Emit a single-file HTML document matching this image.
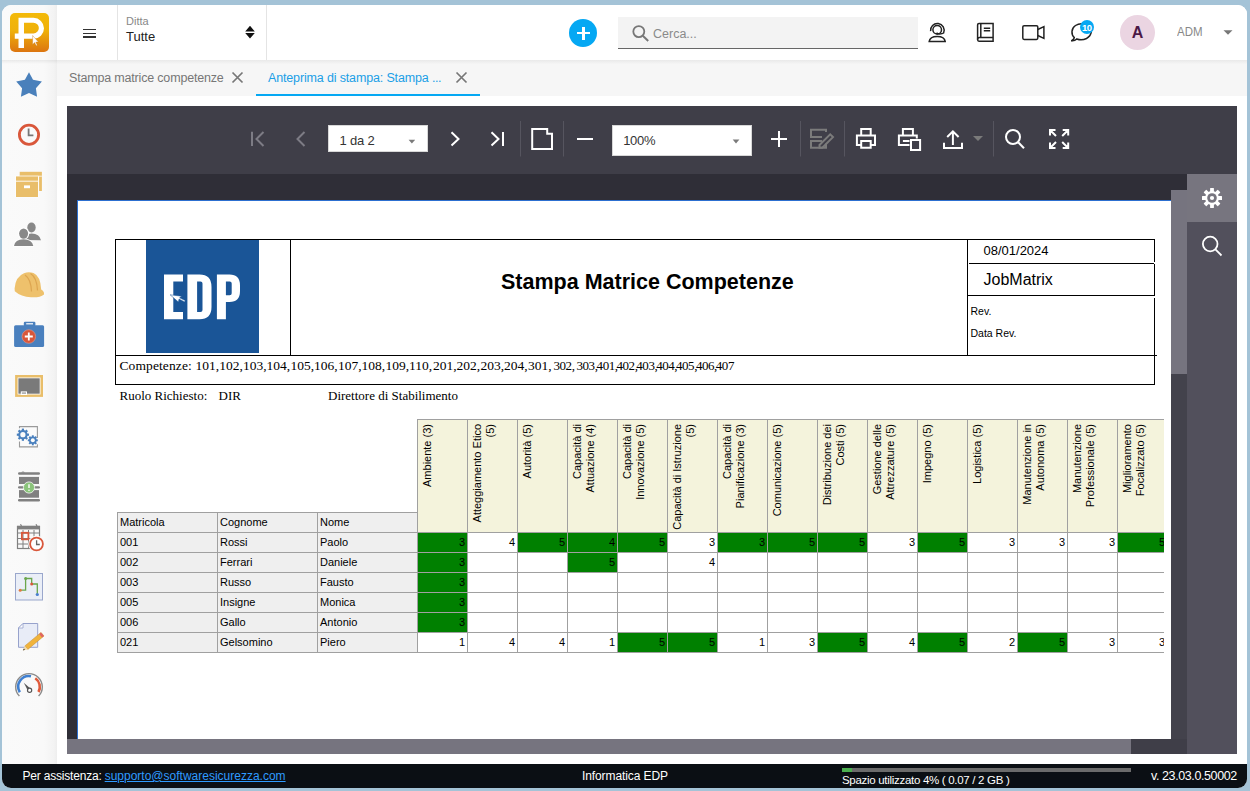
<!DOCTYPE html>
<html><head><meta charset="utf-8">
<style>
*{margin:0;padding:0;box-sizing:border-box}
html,body{width:1250px;height:791px;overflow:hidden;background:#a4c3d7;font-family:"Liberation Sans",sans-serif}
.a{position:absolute}
#app{position:absolute;left:2px;top:5px;width:1245px;height:783px;background:#fff;border-radius:9px;overflow:hidden}
#L{position:absolute;left:-2px;top:-5px;width:1250px;height:791px}
.t{position:absolute;white-space:nowrap;line-height:1}
svg{position:absolute;overflow:visible}
.cz{top:359px;font-family:"Liberation Serif",serif;font-size:13px;color:#000}
.mt{position:absolute;white-space:nowrap;font-size:11px;line-height:19px;color:#000}
.vh{position:absolute;width:113px;height:49px;transform-origin:0 0;transform:rotate(-90deg);font-size:11px;line-height:13px;text-align:right;padding:3px 5px 0 0;color:#000;white-space:nowrap}
</style></head>
<body>
<div id="app"><div id="L">
  <!-- sidebar -->
  <div class="a" style="left:2px;top:5px;width:55px;height:759px;background:linear-gradient(to right,#fafafa 0,#f9f9f9 42px,#f3f3f3 52px,#eeeeee 55px)"></div>
  <div class="a" style="left:2px;top:60px;width:55px;height:4px;background:linear-gradient(rgba(0,0,0,0.065),rgba(0,0,0,0))"></div>
  <!-- header -->
  <div class="a" style="left:57px;top:5px;width:1190px;height:55px;background:#fff"></div>
  <div class="a" style="left:117px;top:5px;width:1px;height:55px;background:#e4e4e4"></div>
  <div class="a" style="left:266px;top:5px;width:1px;height:55px;background:#e4e4e4"></div>
  <!-- logo -->
  <svg style="left:10px;top:13px" width="39" height="39" viewBox="0 0 39 39">
    <defs><linearGradient id="lg" x1="0" y1="0" x2="0" y2="1"><stop offset="0" stop-color="#f3b908"/><stop offset="0.45" stop-color="#efb10a"/><stop offset="1" stop-color="#dc7510"/></linearGradient></defs>
    <rect x="0" y="0" width="39" height="39" rx="5" fill="url(#lg)"/>
    <path fill="#fff" fill-rule="evenodd" d="M8.5,4.8 H23.5 A10.5,10.5 0 0 1 23.5,25.8 H14 V35 H8.5 V25.8 H4.8 V20.5 H8.5 Z M14,9.7 H23.5 A5.35,5.35 0 0 1 23.5,20.4 H14 Z"/>
    <path fill="#fff" stroke="#c77a20" stroke-width="0.4" d="M22.6,22.5 L22.6,31.5 L24.6,29.6 L26.2,32.8 L27.3,32.3 L25.8,29.1 L28.4,29 Z"/>
  </svg>
  <!-- hamburger -->
  <div class="a" style="left:83.4px;top:28.9px;width:12.6px;height:1.4px;background:#333"></div>
  <div class="a" style="left:83.4px;top:32.6px;width:12.6px;height:1.4px;background:#333"></div>
  <div class="a" style="left:83.4px;top:36.3px;width:12.6px;height:1.4px;background:#333"></div>
  <!-- ditta -->
  <div class="t" style="left:126px;top:15.5px;font-size:11px;color:#888">Ditta</div>
  <div class="t" style="left:126px;top:29.5px;font-size:13px;color:#222">Tutte</div>
  <svg style="left:245px;top:25px" width="10" height="14" viewBox="0 0 10 14"><path d="M5,0.7 L9.8,6.5 H0.2 Z M0.2,8.1 H9.8 L5,13.5 Z" fill="#111"/></svg>
  <!-- plus button -->
  <div class="a" style="left:568.8px;top:18.8px;width:28.4px;height:28.4px;border-radius:50%;background:#05a8f3"></div>
  <div class="a" style="left:577px;top:31.9px;width:13px;height:2.2px;background:#fff"></div>
  <div class="a" style="left:582.4px;top:26.5px;width:2.2px;height:13px;background:#fff"></div>
  <!-- search -->
  <div class="a" style="left:618px;top:17px;width:300px;height:32px;background:#f3f3f3;border-bottom:1.5px solid #666"></div>
  <svg style="left:630px;top:23px" width="20" height="20" viewBox="0 0 20 20"><circle cx="8.8" cy="8.6" r="5.5" fill="none" stroke="#777" stroke-width="1.8"/><path d="M12.8,12.8 L18.2,18" stroke="#777" stroke-width="2"/></svg>
  <div class="t" style="left:653px;top:27.5px;font-size:12.5px;color:#8a8a8a">Cerca...</div>
  <!-- headset -->
  <svg style="left:0;top:0" width="1000" height="60" viewBox="0 0 1000 60" fill="none" stroke="#222" stroke-width="1.5">
    <path d="M930.6,31.2 A6.8,6.8 0 1 1 943.6,33 Q942,34.2 937.8,33.8"/>
    <circle cx="937.2" cy="29.7" r="4.3"/>
    <path d="M929.2,41.4 C929.6,38.2 932.5,36.4 937.2,36.4 C941.9,36.4 944.8,38.2 945.2,41.4 Z"/>
    <circle cx="937.2" cy="33.7" r="1.1" fill="#222" stroke="none"/>
    <path d="M979,23.4 H993.1 V41.3 H979 Q977.6,41.3 977.6,39.6 V25.1 Q977.6,23.4 979,23.4 Z"/>
    <path d="M980.8,23.4 V37.6 M977.6,39.6 Q977.6,37.6 979.4,37.6 H993.1"/>
    <path d="M983.8,28.2 H990.2 M983.8,30.8 H990.2"/>
  </svg>
  <!-- video -->
  <svg style="left:1015px;top:15px" width="35" height="30" viewBox="0 0 35 30" fill="none" stroke="#222" stroke-width="1.5">
    <rect x="7.8" y="10.8" width="15" height="13.6" rx="1.3"/>
    <path d="M22.8,14.5 L28.9,11.6 V23.4 L22.8,20.5"/>
  </svg>
  <!-- chat -->
  <svg style="left:1065px;top:15px" width="35" height="30" viewBox="0 0 35 30" fill="none" stroke="#222" stroke-width="1.5">
    <path d="M9.3,22.6 C6,19.5 6,13.5 10.5,10.5 C14,8.2 20,8.3 23.5,10.8 C28,14 27,20.5 21.5,23.5 C18.5,25 14.5,25 11.8,24 C10.5,25.5 8.5,25.8 6.3,25.9 C8.2,24.8 9.2,23.7 9.3,22.6 Z"/>
  </svg>
  <div class="a" style="left:1080px;top:19.8px;width:14.2px;height:14.2px;border-radius:50%;background:#05a8f3"></div>
  <div class="t" style="left:1080px;top:22.6px;width:14.2px;text-align:center;font-size:9.5px;font-weight:bold;color:#fff;letter-spacing:-0.5px;text-indent:-0.5px">10</div>
  <!-- avatar -->
  <div class="a" style="left:1120px;top:15px;width:35px;height:35px;border-radius:50%;background:#ebd5e2"></div>
  <div class="t" style="left:1120px;top:24.5px;width:35px;text-align:center;font-size:16px;font-weight:bold;color:#4b1846">A</div>
  <div class="t" style="left:1177px;top:26.5px;font-size:11.5px;color:#888;transform:scaleY(1.12);transform-origin:0 100%">ADM</div>
  <svg style="left:1223px;top:30px" width="10" height="5" viewBox="0 0 10 5"><path d="M0.5,0.3 H9.5 L5,4.8 Z" fill="#777"/></svg>

  <!-- tabs -->
  <div class="a" style="left:57px;top:60px;width:1190px;height:36px;background:#f6f6f6"></div>
  <div class="a" style="left:57px;top:60px;width:1190px;height:4px;background:linear-gradient(#e9e9e9,#f5f5f5)"></div>
  <div class="t" style="left:69px;top:72px;font-size:12.5px;color:#777;letter-spacing:-0.18px">Stampa matrice competenze</div>
  <svg style="left:231px;top:71px" width="13" height="13" viewBox="0 0 13 13"><path d="M1.5,1.5 L11.5,11.5 M11.5,1.5 L1.5,11.5" stroke="#777" stroke-width="1.7"/></svg>
  <div class="t" style="left:268px;top:72px;font-size:12.5px;color:#1a9fe6;letter-spacing:-0.15px">Anteprima di stampa: Stampa <span style="letter-spacing:-0.4px">...</span></div>
  <svg style="left:455px;top:71px" width="13" height="13" viewBox="0 0 13 13"><path d="M1.5,1.5 L11.5,11.5 M11.5,1.5 L1.5,11.5" stroke="#777" stroke-width="1.7"/></svg>
  <div class="a" style="left:256px;top:93.5px;width:224px;height:2.5px;background:#05a8f3"></div>

  <!-- viewer -->
  <div class="a" style="left:67px;top:106px;width:1170px;height:648px;background:#2f2e37"></div>
  <div class="a" style="left:67px;top:106px;width:1170px;height:68px;background:#3f3e48"></div>
  <!-- toolbar icons -->
  <svg style="left:0;top:0" width="1250" height="180" viewBox="0 0 1250 180" fill="none" stroke-width="2">
    <g stroke="#7d7c85">
      <path d="M252,131.8 V146"/>
      <path d="M263.5,132 L256.5,139 L263.5,146"/>
      <path d="M304.5,132 L297.5,139 L304.5,146"/>
    </g>
    <g stroke="#fff">
      <path d="M451.5,132.3 L458.5,139 L451.5,145.6"/>
      <path d="M491.5,132.3 L498.5,139 L491.5,145.6"/>
      <path d="M503,132 V146"/>
      <path d="M532.2,129 H547.2 V133.8 H552 V149 H532.2 Z"/>
      <path d="M577,139 H593"/>
      <path d="M779,131 V147 M771,139 H787"/>
      <path d="M861.2,134.6 V129 H870.7 V134.6 M861.2,145 H856.9 V135.6 H875 V145 H870.7 M861.2,140.9 H870.7 V147.8 H861.2 Z"/>
      <path d="M902.9,134.6 V129 H912.9 V134.6 M909.5,145 H898.9 V135.6 H916.8 V138.4 M902.9,141.1 H909.5 M911,139.9 H920.1 V149.9 H911 Z"/>
      <path d="M944,142.7 V147.9 H962 V142.7 M952.9,131.5 V145 M947.2,137 L952.9,131.3 L958.6,137"/>
      <circle cx="1013" cy="137" r="7"/>
      <path d="M1018.2,142.2 L1024,148.3"/>
      <path d="M1050,135.5 V130 H1055.5 M1050,130 L1056,136 M1068.2,135.5 V130 H1062.7 M1068.2,130 L1062.2,136 M1050,142.5 V148 H1055.5 M1050,148 L1056,142 M1068.2,142.5 V148 H1062.7 M1068.2,148 L1062.2,142"/>
    </g>
    <g stroke="#7b7b7b">
      <path d="M826,132 V129.8 H811 V137 H822 M822,140.9 H811 V147.8 H826 V143.5"/>
      <path d="M819.5,145 L830.2,134.3 L833,137.1 L822.3,147.8 H819.5 Z"/>
    </g>
    <g fill="#7a7a7a">
      <path d="M973,136 H983 L978,141 Z"/>
      <path d="M408.6,139.8 H415.2 L411.9,143.5 Z" fill="#7a7a7a"/>
      <path d="M732.7,139.4 H739.4 L736,143.5 Z" fill="#7a7a7a"/>
    </g>
    <g stroke="#56555f" stroke-width="1">
      <path d="M520.5,121 V156.5 M563.5,121 V156.5 M800.5,121 V156.5 M844.5,121 V156.5 M993.5,121 V156.5"/>
    </g>
  </svg>
  <div class="a" style="left:328.3px;top:125px;width:99.5px;height:26.7px;background:#fff;border:1px solid #d8d8d8"></div>
  <div class="t" style="left:339.5px;top:134px;font-size:13px;color:#333;letter-spacing:-0.2px">1 da 2</div>
  <div class="a" style="left:612.3px;top:125.4px;width:139.6px;height:30.7px;background:#fff;border:1px solid #d8d8d8"></div>
  <div class="t" style="left:623.2px;top:134px;font-size:13px;color:#333;letter-spacing:-0.3px">100%</div>
  <svg style="left:0;top:0" width="1250" height="180" viewBox="0 0 1250 180">
    <path d="M408.6,139.8 H415.2 L411.9,143.5 Z" fill="#7a7a7a"/>
    <path d="M732.7,139.4 H739.4 L736,143.5 Z" fill="#7a7a7a"/>
  </svg>
  <div id="page" class="a" style="left:77px;top:200px;width:1094px;height:539px;background:#fff;border-left:1px solid #2c6fd0;border-top:1px solid #2c6fd0"></div>
<!--PAGE-->
  <div class="a" style="left:77px;top:200px;width:1094px;height:539px;overflow:hidden">
  <div class="a" style="left:-77px;top:-200px;width:1250px;height:791px">
    <!-- report header box -->
    <div class="a" style="left:115px;top:239px;width:1040px;height:146px;border:1px solid #000"></div>
    <div class="a" style="left:290px;top:239px;width:1px;height:117px;background:#000"></div>
    <div class="a" style="left:967px;top:239px;width:1px;height:117px;background:#000"></div>
    <div class="a" style="left:115px;top:355px;width:1042px;height:1px;background:#000"></div>
    <div class="a" style="left:969px;top:263px;width:185px;height:1px;background:#000"></div>
    <div class="a" style="left:967px;top:295px;width:187px;height:1px;background:#000"></div>
    <div class="a" style="left:1154px;top:262px;width:1px;height:2px;background:#fff"></div>
    <div class="a" style="left:1154px;top:296px;width:1px;height:2px;background:#fff"></div>
    <!-- EDP logo -->
    <svg style="left:146px;top:239.5px" width="113" height="113" viewBox="146 239.5 113 113">
      <rect x="146" y="239.5" width="113" height="113" fill="#1a5597"/>
      <path fill="#fff" d="M164,274.1 H183 V281 H173.3 V311.6 H183 V318.8 H164 Z"/>
      <path fill="#fff" fill-rule="evenodd" d="M187.4,274.1 H199.5 Q211.5,274.1 211.5,286.5 V306.5 Q211.5,318.8 199.5,318.8 H187.4 Z M197.1,281 V311.6 H200.5 Q202.5,311.6 202.5,309.5 V283 Q202.5,281 200.5,281 Z"/>
      <path fill="#fff" fill-rule="evenodd" d="M216.9,274.1 H229.5 Q240,274.1 240,285 V290.5 Q240,301.5 229.5,301.5 H225.9 V318.8 H216.9 Z M225.9,281 V294.7 H229.7 Q231.7,294.7 231.7,292.7 V283 Q231.7,281 229.7,281 Z"/>
      <path fill="#fff" stroke="#1a5597" stroke-width="0.5" d="M170.1,294.3 L181.6,295.7 L179.6,297.3 L185.2,300 L184.6,301.4 L179,298.6 L178.4,301.5 Z"/>
    </svg>
    <div class="t" style="left:501px;top:271.6px;font-size:21.5px;font-weight:bold;color:#000">Stampa Matrice Competenze</div>
    <div class="t" style="left:983.5px;top:243.5px;font-size:13px;color:#000">08/01/2024</div>
    <div class="t" style="left:983.5px;top:271.5px;font-size:16px;color:#000">JobMatrix</div>
    <div class="t" style="left:970.5px;top:306px;font-size:10.5px;color:#000">Rev.</div>
    <div class="t" style="left:970.5px;top:328px;font-size:10.5px;color:#000">Data Rev.</div>
    <div class="t" style="left:119.5px;top:359px;font-family:'Liberation Serif',serif;font-size:13.5px;color:#000;letter-spacing:0.1px">Competenze:</div>
    <div class="t cz" style="left:195.4px;letter-spacing:0;font-size:13.5px">101,</div>
    <div class="t cz" style="left:219.2px;letter-spacing:0;font-size:13.5px">102,</div>
    <div class="t cz" style="left:242.9px;letter-spacing:0;font-size:13.5px">103,</div>
    <div class="t cz" style="left:266.6px;letter-spacing:0;font-size:13.5px">104,</div>
    <div class="t cz" style="left:290.4px;letter-spacing:0;font-size:13.5px">105,</div>
    <div class="t cz" style="left:314.1px;letter-spacing:0;font-size:13.5px">106,</div>
    <div class="t cz" style="left:337.9px;letter-spacing:0;font-size:13.5px">107,</div>
    <div class="t cz" style="left:361.6px;letter-spacing:0;font-size:13.5px">108,</div>
    <div class="t cz" style="left:385.4px;letter-spacing:0;font-size:13.5px">109,</div>
    <div class="t cz" style="left:409.1px;letter-spacing:0;font-size:13.5px">110,</div>
    <div class="t cz" style="left:432.9px;letter-spacing:0;font-size:13.5px">201,</div>
    <div class="t cz" style="left:456.6px;letter-spacing:0;font-size:13.5px">202,</div>
    <div class="t cz" style="left:480.4px;letter-spacing:0;font-size:13.5px">203,</div>
    <div class="t cz" style="left:504.1px;letter-spacing:0;font-size:13.5px">204,</div>
    <div class="t cz" style="left:527.9px;letter-spacing:0;font-size:13.5px">301,</div>
    <div class="t cz" style="left:553.5px;letter-spacing:-0.45px">302,</div>
    <div class="t cz" style="left:576.5px;letter-spacing:-0.45px">303,</div>
    <div class="t cz" style="left:596.6px;letter-spacing:-0.45px">401,</div>
    <div class="t cz" style="left:616.5px;letter-spacing:-0.45px">402,</div>
    <div class="t cz" style="left:636.3px;letter-spacing:-0.45px">403,</div>
    <div class="t cz" style="left:656.2px;letter-spacing:-0.45px">404,</div>
    <div class="t cz" style="left:676.0px;letter-spacing:-0.45px">405,</div>
    <div class="t cz" style="left:695.9px;letter-spacing:-0.45px">406,</div>
    <div class="t cz" style="left:715.8px;letter-spacing:-0.45px">407</div>
    <div class="t" style="left:119.5px;top:389px;font-family:'Liberation Serif',serif;font-size:13px;color:#000">Ruolo Richiesto:</div>
    <div class="t" style="left:218.5px;top:389px;font-family:'Liberation Serif',serif;font-size:13px;color:#000">DIR</div>
    <div class="t" style="left:328px;top:389px;font-family:'Liberation Serif',serif;font-size:13px;color:#000">Direttore di Stabilimento</div>
    <div class="a" style="left:0;top:0;width:1164px;height:791px;overflow:hidden">
<div class="a" style="left:117px;top:512px;width:300px;height:140px;background:#efefef"></div>
<div class="a" style="left:417px;top:419px;width:750px;height:113px;background:#f4f3dc"></div>
<div class="a" style="left:417px;top:532px;width:50px;height:20px;background:#008000"></div>
<div class="a" style="left:467px;top:532px;width:50px;height:20px;background:#fff"></div>
<div class="a" style="left:517px;top:532px;width:50px;height:20px;background:#008000"></div>
<div class="a" style="left:567px;top:532px;width:50px;height:20px;background:#008000"></div>
<div class="a" style="left:617px;top:532px;width:50px;height:20px;background:#008000"></div>
<div class="a" style="left:667px;top:532px;width:50px;height:20px;background:#fff"></div>
<div class="a" style="left:717px;top:532px;width:50px;height:20px;background:#008000"></div>
<div class="a" style="left:767px;top:532px;width:50px;height:20px;background:#008000"></div>
<div class="a" style="left:817px;top:532px;width:50px;height:20px;background:#008000"></div>
<div class="a" style="left:867px;top:532px;width:50px;height:20px;background:#fff"></div>
<div class="a" style="left:917px;top:532px;width:50px;height:20px;background:#008000"></div>
<div class="a" style="left:967px;top:532px;width:50px;height:20px;background:#fff"></div>
<div class="a" style="left:1017px;top:532px;width:50px;height:20px;background:#fff"></div>
<div class="a" style="left:1067px;top:532px;width:50px;height:20px;background:#fff"></div>
<div class="a" style="left:1117px;top:532px;width:50px;height:20px;background:#008000"></div>
<div class="a" style="left:417px;top:552px;width:50px;height:20px;background:#008000"></div>
<div class="a" style="left:467px;top:552px;width:50px;height:20px;background:#fff"></div>
<div class="a" style="left:517px;top:552px;width:50px;height:20px;background:#fff"></div>
<div class="a" style="left:567px;top:552px;width:50px;height:20px;background:#008000"></div>
<div class="a" style="left:617px;top:552px;width:50px;height:20px;background:#fff"></div>
<div class="a" style="left:667px;top:552px;width:50px;height:20px;background:#fff"></div>
<div class="a" style="left:717px;top:552px;width:50px;height:20px;background:#fff"></div>
<div class="a" style="left:767px;top:552px;width:50px;height:20px;background:#fff"></div>
<div class="a" style="left:817px;top:552px;width:50px;height:20px;background:#fff"></div>
<div class="a" style="left:867px;top:552px;width:50px;height:20px;background:#fff"></div>
<div class="a" style="left:917px;top:552px;width:50px;height:20px;background:#fff"></div>
<div class="a" style="left:967px;top:552px;width:50px;height:20px;background:#fff"></div>
<div class="a" style="left:1017px;top:552px;width:50px;height:20px;background:#fff"></div>
<div class="a" style="left:1067px;top:552px;width:50px;height:20px;background:#fff"></div>
<div class="a" style="left:1117px;top:552px;width:50px;height:20px;background:#fff"></div>
<div class="a" style="left:417px;top:572px;width:50px;height:20px;background:#008000"></div>
<div class="a" style="left:467px;top:572px;width:50px;height:20px;background:#fff"></div>
<div class="a" style="left:517px;top:572px;width:50px;height:20px;background:#fff"></div>
<div class="a" style="left:567px;top:572px;width:50px;height:20px;background:#fff"></div>
<div class="a" style="left:617px;top:572px;width:50px;height:20px;background:#fff"></div>
<div class="a" style="left:667px;top:572px;width:50px;height:20px;background:#fff"></div>
<div class="a" style="left:717px;top:572px;width:50px;height:20px;background:#fff"></div>
<div class="a" style="left:767px;top:572px;width:50px;height:20px;background:#fff"></div>
<div class="a" style="left:817px;top:572px;width:50px;height:20px;background:#fff"></div>
<div class="a" style="left:867px;top:572px;width:50px;height:20px;background:#fff"></div>
<div class="a" style="left:917px;top:572px;width:50px;height:20px;background:#fff"></div>
<div class="a" style="left:967px;top:572px;width:50px;height:20px;background:#fff"></div>
<div class="a" style="left:1017px;top:572px;width:50px;height:20px;background:#fff"></div>
<div class="a" style="left:1067px;top:572px;width:50px;height:20px;background:#fff"></div>
<div class="a" style="left:1117px;top:572px;width:50px;height:20px;background:#fff"></div>
<div class="a" style="left:417px;top:592px;width:50px;height:20px;background:#008000"></div>
<div class="a" style="left:467px;top:592px;width:50px;height:20px;background:#fff"></div>
<div class="a" style="left:517px;top:592px;width:50px;height:20px;background:#fff"></div>
<div class="a" style="left:567px;top:592px;width:50px;height:20px;background:#fff"></div>
<div class="a" style="left:617px;top:592px;width:50px;height:20px;background:#fff"></div>
<div class="a" style="left:667px;top:592px;width:50px;height:20px;background:#fff"></div>
<div class="a" style="left:717px;top:592px;width:50px;height:20px;background:#fff"></div>
<div class="a" style="left:767px;top:592px;width:50px;height:20px;background:#fff"></div>
<div class="a" style="left:817px;top:592px;width:50px;height:20px;background:#fff"></div>
<div class="a" style="left:867px;top:592px;width:50px;height:20px;background:#fff"></div>
<div class="a" style="left:917px;top:592px;width:50px;height:20px;background:#fff"></div>
<div class="a" style="left:967px;top:592px;width:50px;height:20px;background:#fff"></div>
<div class="a" style="left:1017px;top:592px;width:50px;height:20px;background:#fff"></div>
<div class="a" style="left:1067px;top:592px;width:50px;height:20px;background:#fff"></div>
<div class="a" style="left:1117px;top:592px;width:50px;height:20px;background:#fff"></div>
<div class="a" style="left:417px;top:612px;width:50px;height:20px;background:#008000"></div>
<div class="a" style="left:467px;top:612px;width:50px;height:20px;background:#fff"></div>
<div class="a" style="left:517px;top:612px;width:50px;height:20px;background:#fff"></div>
<div class="a" style="left:567px;top:612px;width:50px;height:20px;background:#fff"></div>
<div class="a" style="left:617px;top:612px;width:50px;height:20px;background:#fff"></div>
<div class="a" style="left:667px;top:612px;width:50px;height:20px;background:#fff"></div>
<div class="a" style="left:717px;top:612px;width:50px;height:20px;background:#fff"></div>
<div class="a" style="left:767px;top:612px;width:50px;height:20px;background:#fff"></div>
<div class="a" style="left:817px;top:612px;width:50px;height:20px;background:#fff"></div>
<div class="a" style="left:867px;top:612px;width:50px;height:20px;background:#fff"></div>
<div class="a" style="left:917px;top:612px;width:50px;height:20px;background:#fff"></div>
<div class="a" style="left:967px;top:612px;width:50px;height:20px;background:#fff"></div>
<div class="a" style="left:1017px;top:612px;width:50px;height:20px;background:#fff"></div>
<div class="a" style="left:1067px;top:612px;width:50px;height:20px;background:#fff"></div>
<div class="a" style="left:1117px;top:612px;width:50px;height:20px;background:#fff"></div>
<div class="a" style="left:417px;top:632px;width:50px;height:20px;background:#fff"></div>
<div class="a" style="left:467px;top:632px;width:50px;height:20px;background:#fff"></div>
<div class="a" style="left:517px;top:632px;width:50px;height:20px;background:#fff"></div>
<div class="a" style="left:567px;top:632px;width:50px;height:20px;background:#fff"></div>
<div class="a" style="left:617px;top:632px;width:50px;height:20px;background:#008000"></div>
<div class="a" style="left:667px;top:632px;width:50px;height:20px;background:#008000"></div>
<div class="a" style="left:717px;top:632px;width:50px;height:20px;background:#fff"></div>
<div class="a" style="left:767px;top:632px;width:50px;height:20px;background:#fff"></div>
<div class="a" style="left:817px;top:632px;width:50px;height:20px;background:#008000"></div>
<div class="a" style="left:867px;top:632px;width:50px;height:20px;background:#fff"></div>
<div class="a" style="left:917px;top:632px;width:50px;height:20px;background:#008000"></div>
<div class="a" style="left:967px;top:632px;width:50px;height:20px;background:#fff"></div>
<div class="a" style="left:1017px;top:632px;width:50px;height:20px;background:#008000"></div>
<div class="a" style="left:1067px;top:632px;width:50px;height:20px;background:#fff"></div>
<div class="a" style="left:1117px;top:632px;width:50px;height:20px;background:#fff"></div>
<div class="a" style="left:417px;top:419px;width:750px;height:1px;background:#a0a0a0"></div>
<div class="a" style="left:117px;top:512px;width:301px;height:1px;background:#a0a0a0"></div>
<div class="a" style="left:117px;top:532px;width:1051px;height:1px;background:#a0a0a0"></div>
<div class="a" style="left:117px;top:552px;width:1051px;height:1px;background:#a0a0a0"></div>
<div class="a" style="left:117px;top:572px;width:1051px;height:1px;background:#a0a0a0"></div>
<div class="a" style="left:117px;top:592px;width:1051px;height:1px;background:#a0a0a0"></div>
<div class="a" style="left:117px;top:612px;width:1051px;height:1px;background:#a0a0a0"></div>
<div class="a" style="left:117px;top:632px;width:1051px;height:1px;background:#a0a0a0"></div>
<div class="a" style="left:117px;top:652px;width:1051px;height:1px;background:#a0a0a0"></div>
<div class="a" style="left:117px;top:512px;width:1px;height:141px;background:#a0a0a0"></div>
<div class="a" style="left:217px;top:512px;width:1px;height:141px;background:#a0a0a0"></div>
<div class="a" style="left:317px;top:512px;width:1px;height:141px;background:#a0a0a0"></div>
<div class="a" style="left:417px;top:419px;width:1px;height:234px;background:#a0a0a0"></div>
<div class="a" style="left:467px;top:419px;width:1px;height:234px;background:#a0a0a0"></div>
<div class="a" style="left:517px;top:419px;width:1px;height:234px;background:#a0a0a0"></div>
<div class="a" style="left:567px;top:419px;width:1px;height:234px;background:#a0a0a0"></div>
<div class="a" style="left:617px;top:419px;width:1px;height:234px;background:#a0a0a0"></div>
<div class="a" style="left:667px;top:419px;width:1px;height:234px;background:#a0a0a0"></div>
<div class="a" style="left:717px;top:419px;width:1px;height:234px;background:#a0a0a0"></div>
<div class="a" style="left:767px;top:419px;width:1px;height:234px;background:#a0a0a0"></div>
<div class="a" style="left:817px;top:419px;width:1px;height:234px;background:#a0a0a0"></div>
<div class="a" style="left:867px;top:419px;width:1px;height:234px;background:#a0a0a0"></div>
<div class="a" style="left:917px;top:419px;width:1px;height:234px;background:#a0a0a0"></div>
<div class="a" style="left:967px;top:419px;width:1px;height:234px;background:#a0a0a0"></div>
<div class="a" style="left:1017px;top:419px;width:1px;height:234px;background:#a0a0a0"></div>
<div class="a" style="left:1067px;top:419px;width:1px;height:234px;background:#a0a0a0"></div>
<div class="a" style="left:1117px;top:419px;width:1px;height:234px;background:#a0a0a0"></div>
<div class="a" style="left:1167px;top:419px;width:1px;height:234px;background:#a0a0a0"></div>
<div class="mt" style="left:120px;top:513px">Matricola</div>
<div class="mt" style="left:220px;top:513px">Cognome</div>
<div class="mt" style="left:320px;top:513px">Nome</div>
<div class="mt" style="left:120px;top:533px">001</div>
<div class="mt" style="left:220px;top:533px">Rossi</div>
<div class="mt" style="left:320px;top:533px">Paolo</div>
<div class="mt" style="left:120px;top:553px">002</div>
<div class="mt" style="left:220px;top:553px">Ferrari</div>
<div class="mt" style="left:320px;top:553px">Daniele</div>
<div class="mt" style="left:120px;top:573px">003</div>
<div class="mt" style="left:220px;top:573px">Russo</div>
<div class="mt" style="left:320px;top:573px">Fausto</div>
<div class="mt" style="left:120px;top:593px">005</div>
<div class="mt" style="left:220px;top:593px">Insigne</div>
<div class="mt" style="left:320px;top:593px">Monica</div>
<div class="mt" style="left:120px;top:613px">006</div>
<div class="mt" style="left:220px;top:613px">Gallo</div>
<div class="mt" style="left:320px;top:613px">Antonio</div>
<div class="mt" style="left:120px;top:633px">021</div>
<div class="mt" style="left:220px;top:633px">Gelsomino</div>
<div class="mt" style="left:320px;top:633px">Piero</div>
<div class="mt" style="left:417px;top:533px;width:48px;text-align:right">3</div>
<div class="mt" style="left:467px;top:533px;width:48px;text-align:right">4</div>
<div class="mt" style="left:517px;top:533px;width:48px;text-align:right">5</div>
<div class="mt" style="left:567px;top:533px;width:48px;text-align:right">4</div>
<div class="mt" style="left:617px;top:533px;width:48px;text-align:right">5</div>
<div class="mt" style="left:667px;top:533px;width:48px;text-align:right">3</div>
<div class="mt" style="left:717px;top:533px;width:48px;text-align:right">3</div>
<div class="mt" style="left:767px;top:533px;width:48px;text-align:right">5</div>
<div class="mt" style="left:817px;top:533px;width:48px;text-align:right">5</div>
<div class="mt" style="left:867px;top:533px;width:48px;text-align:right">3</div>
<div class="mt" style="left:917px;top:533px;width:48px;text-align:right">5</div>
<div class="mt" style="left:967px;top:533px;width:48px;text-align:right">3</div>
<div class="mt" style="left:1017px;top:533px;width:48px;text-align:right">3</div>
<div class="mt" style="left:1067px;top:533px;width:48px;text-align:right">3</div>
<div class="mt" style="left:1117px;top:533px;width:48px;text-align:right">5</div>
<div class="mt" style="left:417px;top:553px;width:48px;text-align:right">3</div>
<div class="mt" style="left:567px;top:553px;width:48px;text-align:right">5</div>
<div class="mt" style="left:667px;top:553px;width:48px;text-align:right">4</div>
<div class="mt" style="left:417px;top:573px;width:48px;text-align:right">3</div>
<div class="mt" style="left:417px;top:593px;width:48px;text-align:right">3</div>
<div class="mt" style="left:417px;top:613px;width:48px;text-align:right">3</div>
<div class="mt" style="left:417px;top:633px;width:48px;text-align:right">1</div>
<div class="mt" style="left:467px;top:633px;width:48px;text-align:right">4</div>
<div class="mt" style="left:517px;top:633px;width:48px;text-align:right">4</div>
<div class="mt" style="left:567px;top:633px;width:48px;text-align:right">1</div>
<div class="mt" style="left:617px;top:633px;width:48px;text-align:right">5</div>
<div class="mt" style="left:667px;top:633px;width:48px;text-align:right">5</div>
<div class="mt" style="left:717px;top:633px;width:48px;text-align:right">1</div>
<div class="mt" style="left:767px;top:633px;width:48px;text-align:right">3</div>
<div class="mt" style="left:817px;top:633px;width:48px;text-align:right">5</div>
<div class="mt" style="left:867px;top:633px;width:48px;text-align:right">4</div>
<div class="mt" style="left:917px;top:633px;width:48px;text-align:right">5</div>
<div class="mt" style="left:967px;top:633px;width:48px;text-align:right">2</div>
<div class="mt" style="left:1017px;top:633px;width:48px;text-align:right">5</div>
<div class="mt" style="left:1067px;top:633px;width:48px;text-align:right">3</div>
<div class="mt" style="left:1117px;top:633px;width:48px;text-align:right">3</div>
<div class="vh" style="left:418px;top:532px">Ambiente (3)</div>
<div class="vh" style="left:468px;top:532px">Atteggiamento Etico<br>(5)</div>
<div class="vh" style="left:518px;top:532px">Autorità (5)</div>
<div class="vh" style="left:568px;top:532px">Capacità di<br>Attuazione (4)</div>
<div class="vh" style="left:618px;top:532px">Capacità di<br>Innovazione (5)</div>
<div class="vh" style="left:668px;top:532px">Capacità di Istruzione<br>(5)</div>
<div class="vh" style="left:718px;top:532px">Capacità di<br>Pianificazione (3)</div>
<div class="vh" style="left:768px;top:532px">Comunicazione (5)</div>
<div class="vh" style="left:818px;top:532px">Distribuzione dei<br>Costi (5)</div>
<div class="vh" style="left:868px;top:532px">Gestione delle<br>Attrezzature (5)</div>
<div class="vh" style="left:918px;top:532px">Impegno (5)</div>
<div class="vh" style="left:968px;top:532px">Logistica (5)</div>
<div class="vh" style="left:1018px;top:532px">Manutenzione in<br>Autonoma (5)</div>
<div class="vh" style="left:1068px;top:532px">Manutenzione<br>Professionale (5)</div>
<div class="vh" style="left:1118px;top:532px">Miglioramento<br>Focalizzato (5)</div>
    </div>
  </div>
  </div>
<!--/PAGE-->
  <!-- v scrollbar -->
  <div class="a" style="left:1171px;top:190px;width:16px;height:549px;background:#43424c"></div>
  <div class="a" style="left:1171px;top:190px;width:16px;height:184px;background:#76747f"></div>
  <!-- h scrollbar -->
  <div class="a" style="left:67px;top:739px;width:1120px;height:15px;background:#3f3e48"></div>
  <div class="a" style="left:67px;top:739px;width:1064px;height:15px;background:#76747f"></div>
  <!-- right panel -->
  <div class="a" style="left:1187px;top:174px;width:50px;height:580px;background:#52505c"></div>
  <div class="a" style="left:1187px;top:174px;width:50px;height:48px;background:#77757f"></div>
  <svg style="left:1202px;top:188px" width="20" height="20" viewBox="-10 -10 20 20">
    <g fill="#fff"><circle r="6.9"/><rect x="-1.9" y="-10" width="3.8" height="5" rx="0.5" transform="rotate(0)"/><rect x="-1.9" y="-10" width="3.8" height="5" rx="0.5" transform="rotate(45)"/><rect x="-1.9" y="-10" width="3.8" height="5" rx="0.5" transform="rotate(90)"/><rect x="-1.9" y="-10" width="3.8" height="5" rx="0.5" transform="rotate(135)"/><rect x="-1.9" y="-10" width="3.8" height="5" rx="0.5" transform="rotate(180)"/><rect x="-1.9" y="-10" width="3.8" height="5" rx="0.5" transform="rotate(225)"/><rect x="-1.9" y="-10" width="3.8" height="5" rx="0.5" transform="rotate(270)"/><rect x="-1.9" y="-10" width="3.8" height="5" rx="0.5" transform="rotate(315)"/></g>
    <circle r="4.8" fill="#77757f"/>
    <circle r="2.1" fill="#fff"/>
  </svg>
  <svg style="left:1195px;top:230px" width="35" height="35" viewBox="0 0 35 35" fill="none" stroke="#fff" stroke-width="1.8">
    <circle cx="15.2" cy="14" r="7.3"/>
    <path d="M20.4,19.4 L26.5,25.5"/>
  </svg>

  <!-- footer -->
  <div class="a" style="left:2px;top:764px;width:1245px;height:24px;background:#0b0f14"></div>
  <div class="t" style="left:22.5px;top:770px;font-size:12px;color:#fff;letter-spacing:-0.2px">Per assistenza: <span style="color:#2f9bff;text-decoration:underline;letter-spacing:0">supporto@softwaresicurezza.com</span></div>
  <div class="t" style="left:582px;top:770px;font-size:12px;color:#fff;letter-spacing:-0.1px">Informatica EDP</div>
  <div class="a" style="left:842px;top:768px;width:289px;height:4px;background:#6b6b6b"></div>
  <div class="a" style="left:842px;top:768px;width:10px;height:4px;background:#4caf50"></div>
  <div class="t" style="left:842px;top:774.5px;font-size:11.5px;color:#fff;letter-spacing:-0.3px">Spazio utilizzato 4% ( 0.07 / 2 GB )</div>
  <div class="t" style="left:1151px;top:769.8px;font-size:12.5px;color:#fff;letter-spacing:-0.4px">v. 23.03.0.50002</div>

  <!-- sidebar icons -->
  <svg style="left:0;top:0" width="60" height="720" viewBox="0 0 60 720">
    <!-- star -->
    <path fill="#4a80bb" d="M29,72.3 L33,79.7 L41.9,81.4 L35.9,88.2 L37.1,96.7 L29,93.1 L20.9,96.7 L22.1,88.2 L16.2,81.4 L24.9,79.7 Z"/>
    <!-- clock -->
    <circle cx="29" cy="134.7" r="9.6" fill="none" stroke="#d9573b" stroke-width="2.8"/>
    <path d="M28.6,128.5 V135.4 H33.4" fill="none" stroke="#777" stroke-width="1.8"/>
    <!-- boxes -->
    <rect x="19.7" y="171.8" width="22.2" height="19.2" fill="#e9be6a"/>
    <path d="M19.7,176.2 H41.9" stroke="#fff" stroke-width="0.8"/>
    <path d="M38.6,176.5 V191" stroke="#fff" stroke-width="1"/>
    <rect x="15.5" y="175.8" width="23" height="21.5" fill="#fff"/>
    <rect x="16" y="176.4" width="22" height="20.6" fill="#e9be6a"/>
    <path d="M16,181.2 H38" stroke="#fff" stroke-width="0.9"/>
    <rect x="24" y="185.4" width="6" height="2.8" fill="#fff"/>
    <!-- people -->
    <g fill="#888">
      <ellipse cx="31.5" cy="227.5" rx="4.2" ry="5"/>
      <path d="M24,240 Q25,233.5 31.5,233.5 Q39.5,233.5 41,240.2 Z"/>
    </g>
    <ellipse cx="23.6" cy="233.6" rx="5.6" ry="6.2" fill="#fff"/>
    <path d="M13,246.5 Q14,238.5 23.5,238.5 Q33,238.5 34.2,246.5 Z" fill="#fff"/>
    <g fill="#888">
      <ellipse cx="23.6" cy="233.6" rx="4.5" ry="5.2"/>
      <path d="M14,246 Q15,239.3 23.5,239.3 Q32,239.3 33.3,246 Z"/>
    </g>
    <!-- helmet -->
    <path fill="#eec16c" d="M14.6,288.5 Q15.5,276.5 24,273.2 Q28.5,271.6 33.5,273 Q40.5,276 41.2,289.5 Q44.5,291.3 44,294.5 Q40,297.8 31,297.3 Q21,296.8 14.8,291.2 Z"/>
    <path d="M25,275 Q31,279 31.5,291.5 M30.5,273.5 Q37,277.5 37.5,290.5" fill="none" stroke="#dda550" stroke-width="1.2"/>
    <!-- medkit -->
    <rect x="23.8" y="321.8" width="11.6" height="4.5" rx="1.2" fill="#4a80be"/>
    <rect x="26.2" y="323.2" width="6.8" height="1.2" fill="#fff"/>
    <rect x="14.1" y="325.2" width="30" height="21.8" rx="1.5" fill="#4a80be"/>
    <circle cx="28.8" cy="336.5" r="6.8" fill="#d9573b" stroke="#e89a8a" stroke-width="0.6"/>
    <path d="M28.8,332.5 V340.5 M24.8,336.5 H32.8" stroke="#fff" stroke-width="1.8"/>
    <!-- board -->
    <rect x="15.1" y="375" width="27.9" height="21.9" fill="#e9be6a"/>
    <rect x="17.6" y="377.5" width="22.9" height="17" fill="#fff"/>
    <rect x="18.4" y="378.3" width="21.3" height="15.4" fill="#7a7a7a"/>
    <rect x="20.8" y="391.4" width="6.2" height="3.6" fill="#fff"/>
    <rect x="21.8" y="392.3" width="4.2" height="1.6" fill="#aaa"/>
    <!-- gears with bracket -->
    <rect x="19.5" y="426.6" width="18" height="20.4" fill="#fbfbfb"/>
    <path d="M19.5,441.5 V446.9 H37.4 V444.3 M37.4,438 V426.6 H19.5 V428.2" fill="none" stroke="#9a9a9a" stroke-width="1.1"/>
    <g fill="#4a80be">
      <circle cx="22.9" cy="434.7" r="4.7"/>
      <g transform="translate(22.9,434.7)"><rect x="-1.1" y="-6.1" width="2.2" height="12.2"/><rect x="-1.1" y="-6.1" width="2.2" height="12.2" transform="rotate(45)"/><rect x="-1.1" y="-6.1" width="2.2" height="12.2" transform="rotate(90)"/><rect x="-1.1" y="-6.1" width="2.2" height="12.2" transform="rotate(135)"/></g>
      <circle cx="32.8" cy="440.3" r="3.8"/>
      <g transform="translate(32.8,440.3)"><rect x="-0.95" y="-5" width="1.9" height="10"/><rect x="-0.95" y="-5" width="1.9" height="10" transform="rotate(45)"/><rect x="-0.95" y="-5" width="1.9" height="10" transform="rotate(90)"/><rect x="-0.95" y="-5" width="1.9" height="10" transform="rotate(135)"/></g>
    </g>
    <circle cx="22.9" cy="434.7" r="2.6" fill="#fbfbfb"/>
    <circle cx="32.8" cy="440.3" r="2" fill="#fbfbfb"/>
    <!-- barrel -->
    <g fill="#808080">
      <rect x="18" y="472.3" width="22" height="2.5" rx="1.25"/>
      <path d="M21,472.6 Q23,470.6 25,472.6 Z"/>
      <rect x="19" y="476.9" width="20" height="7.1"/>
      <rect x="18" y="486.3" width="22" height="2.3" rx="1.15"/>
      <rect x="19" y="490.1" width="20" height="7.6"/>
      <rect x="18" y="499" width="22" height="2.5" rx="1.25"/>
    </g>
    <circle cx="29" cy="487.5" r="5.6" fill="#8bc47b" stroke="#f9f9f9" stroke-width="0.8"/>
    <path d="M29,484.3 V488" stroke="#fff" stroke-width="1.4"/>
    <circle cx="29" cy="490.3" r="0.8" fill="#fff"/>
    <!-- calendar -->
    <g fill="none" stroke="#808080">
      <rect x="17.5" y="526.5" width="22" height="22" stroke-width="1.2"/>
      <path d="M17.5,533 H39.5 M17.5,538.5 H39.5 M17.5,544 H39.5 M23,530 V548.5 M28.5,530 V548.5 M34,530 V548.5" stroke-width="1"/>
    </g>
    <rect x="17" y="525.8" width="23" height="3.6" fill="#808080"/>
    <path d="M20.5,524.2 L21.7,526.5 M36,524.2 L37.2,526.5" stroke="#808080" stroke-width="1.2"/>
    <rect x="21.9" y="532.8" width="6.5" height="6.5" fill="none" stroke="#d9573b" stroke-width="1.8"/>
    <circle cx="36.5" cy="544" r="8.3" fill="#f9f9f9"/>
    <circle cx="36.5" cy="544" r="6.4" fill="#fff" stroke="#d9573b" stroke-width="1.8"/>
    <path d="M36.6,540.2 V544.5 H39.8" fill="none" stroke="#666" stroke-width="1.3"/>
    <!-- route -->
    <rect x="15.5" y="573.5" width="27" height="26.5" fill="#eaeef7" stroke="#9aa7cc" stroke-width="1"/>
    <path d="M20.2,590.2 H25.6 V578.5 H31.7 V584 H37.3 V594.5" fill="none" stroke="#6aa64c" stroke-width="1.3"/>
    <circle cx="20.2" cy="590.2" r="1.5" fill="#e07a40"/>
    <circle cx="25.6" cy="578.5" r="1.5" fill="#6aa64c"/>
    <circle cx="31.7" cy="584" r="1.5" fill="#d9573b"/>
    <circle cx="37.3" cy="594.5" r="1.6" fill="#4a80d0"/>
    <!-- doc with pencil -->
    <path d="M23,623.5 H37.7 V647.3 H18.5 V628 Z" fill="#e8ecf7" stroke="#97a2cc" stroke-width="1"/>
    <path d="M18.5,628 H23 V623.5 Z" fill="#fff" stroke="#97a2cc" stroke-width="0.8"/>
    <path d="M24.83,645.93 L41.03,632.43 L43.97,635.97 L27.77,649.47 Z" fill="#f0b33c" stroke="#c08a30" stroke-width="0.5"/>
    <path d="M39.11,634.03 L41.03,632.43 L43.97,635.97 L42.05,637.57 Z" fill="#e06464"/>
    <path d="M24.83,645.93 L27.77,649.47 L22.9,650.6 Z" fill="#f3d9a6"/>
    <path d="M23.9,648.6 L24.9,649.8 L22.9,650.6 Z" fill="#333"/>
    <!-- gauge -->
    <path d="M19.4,696.1 A13.3,13.3 0 1 1 38.6,696.1" fill="none" stroke="#8a8a8a" stroke-width="1.4"/>
    <path d="M19.8,692.2 A10.6,10.6 0 0 1 31,676.3" fill="none" stroke="#3f7fd0" stroke-width="2.6"/>
    <path d="M35.3,678.2 A10.6,10.6 0 0 1 38.5,692" fill="none" stroke="#e05a3a" stroke-width="2.6"/>
    <path d="M23.8,682.8 L30.6,688.8 L28.2,691.2 Z" fill="#555"/>
    <circle cx="29.6" cy="690.2" r="2.1" fill="#fff" stroke="#555" stroke-width="1.2"/>
  </svg>
</div></div>
</body></html>
